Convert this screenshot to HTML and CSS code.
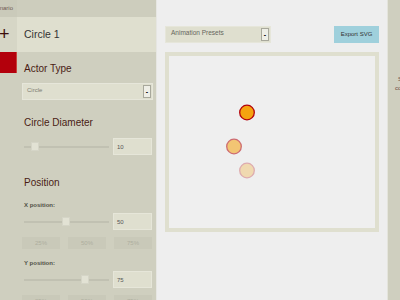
FILE: index.html
```html
<!DOCTYPE html>
<html lang="en">
<head>
  <meta charset="UTF-8">
  <meta name="viewport" content="width=device-width, initial-scale=1.0">
  <title>Circle Animator</title>
  <link rel="stylesheet" href="styles.css">
</head>
<body>
  <div class="rail">
    <div class="rail-top"><span>Scenario</span></div>
    <div class="rail-add">+</div>
    <div class="rail-actor"></div>
  </div>

  <div class="panel">
    <div class="panel-top"></div>
    <div class="panel-head">Circle 1</div>

    <h2 class="first">Actor Type</h2>
    <div class="select wide">
      <span>Circle</span>
      <b class="select-btn">-</b>
    </div>

    <h2>Circle Diameter</h2>
    <div class="slider-row">
      <div class="track"><i class="thumb" style="left: 7px"></i></div>
      <div class="num">10</div>
    </div>

    <h2 class="group">Position</h2>
    <div class="label">X position:</div>
    <div class="slider-row">
      <div class="track"><i class="thumb" style="left: 38px"></i></div>
      <div class="num">50</div>
    </div>
    <div class="presets">
      <span>25%</span><span>50%</span><span>75%</span>
    </div>

    <div class="label">Y position:</div>
    <div class="slider-row">
      <div class="track"><i class="thumb" style="left: 57px"></i></div>
      <div class="num">75</div>
    </div>
    <div class="presets">
      <span>25%</span><span>50%</span><span>75%</span>
    </div>
  </div>

  <div class="stage">
    <div class="toolbar">
      <div class="select presets-select">
        <span>Animation Presets</span>
        <b class="select-btn">-</b>
      </div>
      <div class="export">Export SVG</div>
    </div>
    <div class="canvas">
      <svg width="206" height="172" viewBox="0 0 206 172">
        <circle cx="65" cy="90.5" r="7.3" class="ghost2"></circle>
        <circle cx="78" cy="114.5" r="7.3" class="ghost3"></circle>
        <circle cx="78" cy="56.5" r="7.3" class="actor"></circle>
      </svg>
    </div>
  </div>

  <div class="aside">
    <div class="aside-text">
      <span class="l1">Select</span>
      <span class="l2">component</span>
    </div>
  </div>
</body>
</html>
```

FILE: styles.css
```css
body {
  margin: 0;
  width: 400px;
  height: 300px;
  overflow: hidden;
  display: flex;
  font-family: "Liberation Sans", Arial, sans-serif;
  background: #eeeeee;
}

/* narrow left rail */
.rail { width: 17px; flex: none; background: #cfcfbf; overflow: hidden; }
.rail-top {
  height: 17px; background: #cacaba;
  font-size: 6px; color: #6e5a52; line-height: 17px;
  display: flex; justify-content: flex-end; padding-right: 4px;
}
.rail-top span { white-space: nowrap; }
.rail-add {
  height: 35px; background: #d6d6c6;
  font-size: 18px; line-height: 35px; color: #3b0d0a;
  text-indent: -1px;
}
.rail-actor { height: 21px; background: #b3000c; border-right: 1px solid #c9413a; }

/* actor properties */
.panel { width: 139px; flex: none; background: #cfcfbf; }
.panel-top { height: 17px; background: #cdcdbd; }
.panel-head {
  height: 35px; line-height: 35px; padding-left: 7px;
  background: #dfdfcf; color: #333;
  font-size: 10.5px;
}
.panel h2 {
  margin: 17px 0 9px; padding-left: 7px; line-height: 12px;
  font-size: 10px; font-weight: normal; color: #4a1c14;
}
.panel h2.first { margin: 11px 0 8px; }
.panel h2.group { margin: 22px 0 12px; }

.select {
  position: relative;
  height: 17px; box-sizing: border-box;
  background: #dfdfcf; border: 1px solid #e6e6da;
  font-size: 6px; color: #7d7d72; padding: 3px 4px;
}
.select.wide { margin: 0 3px 0 5px; }
.select-btn {
  position: absolute; right: 1px; top: 1px; bottom: 1px; width: 8px;
  background: #eeeee6; border: 1px solid #a8a89c; box-sizing: border-box;
  font-size: 7px; color: #000; text-align: center; line-height: 11px;
}

.slider-row { display: flex; align-items: center; padding: 0 4px 0 7px; height: 17px; }
.track {
  position: relative; flex: 1; height: 2px; margin-right: 4px;
  background: #c1c1b2;
}
.thumb {
  position: absolute; top: -4px; width: 8px; height: 9px;
  background: #e2e2d4; border: 1px solid #d5d5c7; box-sizing: border-box;
}
.num {
  width: 39px; height: 17px; box-sizing: border-box;
  background: #dfdfcf; border: 1px solid #e6e6d9;
  font-size: 6px; color: #555; padding: 5px 3px;
}

.label {
  font-size: 6px; font-weight: bold; color: #4f4f46;
  line-height: 8px; padding-left: 7px; margin-bottom: 4px;
}
.presets { display: flex; gap: 8px; padding: 0 4px 0 5px; height: 12px; margin: 7px 0 10px; }
.presets span {
  flex: 1; background: #c9c9b9; color: #aeae9e;
  font-size: 6px; text-align: center; line-height: 12px;
}

/* stage */
.stage {
  flex: 1; background: #eeeeee; border-left: 1px solid #e6e6e2;
  padding: 26px 8px 0 8px;
}
.toolbar { display: flex; justify-content: space-between; height: 17px; }
.presets-select { width: 106px; padding: 2px 5px; color: #66665c; font-size: 6.5px; }
.export {
  width: 45px; background: #9fd0dc;
  font-size: 6px; color: #333; text-align: center; line-height: 17px;
}
.canvas {
  margin-top: 9px; height: 172px;
  border: 4px solid #dfdfcf; background: #efefef;
}
.canvas svg { display: block; }
.actor { fill: #f5a30f; stroke: #b3000c; stroke-width: 1.3; }
.ghost2 { fill: #f5a30f; stroke: #b3000c; stroke-width: 1.3; opacity: 0.55; }
.ghost3 { fill: #f5a30f; stroke: #b3000c; stroke-width: 1.3; opacity: 0.28; }

/* right rail */
.aside { width: 13px; flex: none; background: #cfcfbf; border-left: 1px solid #e4e4dc; overflow: hidden; }
.aside-text {
  margin-top: 75px;
  font-size: 6px; line-height: 9px; color: #6e4a3e; white-space: nowrap;
}
.aside-text span { display: block; }
.aside-text .l1 { padding-left: 10px; }
.aside-text .l2 { padding-left: 7px; }
```
